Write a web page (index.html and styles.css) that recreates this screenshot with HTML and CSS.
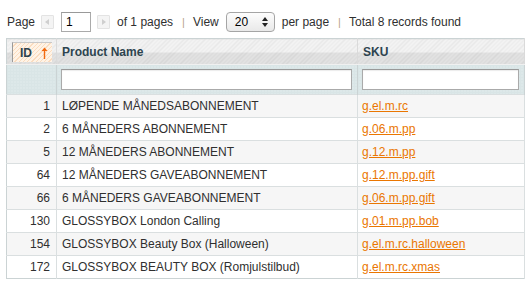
FILE: index.html
```html
<!DOCTYPE html>
<html lang="en">
<head>
    <meta charset="UTF-8">
    <meta name="viewport" content="width=device-width, initial-scale=1.0">
    <title>Products</title>
    <link rel="stylesheet" href="styles.css">
</head>
<body>
    <div class="grid-wrap">
        <div class="pager">
            <span class="label-page">Page</span>
            <span class="arrow-btn prev"></span>
            <input class="page-input" type="text" value="1">
            <span class="arrow-btn next"></span>
            <span class="of-pages">of 1 pages</span>
            <span class="sep">|</span>
            <span class="label-view">View</span>
            <span class="view-select">20<span class="spin"></span></span>
            <span class="per-page">per page</span>
            <span class="sep">|</span>
            <span class="total">Total 8 records found</span>
        </div>

        <table class="data">
            <colgroup>
                <col class="col-id">
                <col class="col-name">
                <col class="col-sku">
            </colgroup>
            <thead>
                <tr class="headings">
                    <th class="sort-cell">
                        <span class="sort-box">ID
                            <svg class="sort-arrow" width="7" height="12" viewBox="0 0 7 12"><path d="M3.5 0.5 L0.5 4 H2.8 V12 H4.2 V4 H6.5 Z" fill="#f26a10"/></svg>
                        </span>
                    </th>
                    <th>Product Name</th>
                    <th>SKU</th>
                </tr>
                <tr class="filter">
                    <th></th>
                    <th><input class="filter-input" type="text"></th>
                    <th><input class="filter-input" type="text"></th>
                </tr>
            </thead>
            <tbody>
                <tr class="even"><td class="num">1</td><td>LØPENDE MÅNEDSABONNEMENT</td><td><a href="#">g.el.m.rc</a></td></tr>
                <tr><td class="num">2</td><td>6 MÅNEDERS ABONNEMENT</td><td><a href="#">g.06.m.pp</a></td></tr>
                <tr class="even"><td class="num">5</td><td>12 MÅNEDERS ABONNEMENT</td><td><a href="#">g.12.m.pp</a></td></tr>
                <tr><td class="num">64</td><td>12 MÅNEDERS GAVEABONNEMENT</td><td><a href="#">g.12.m.pp.gift</a></td></tr>
                <tr class="even"><td class="num">66</td><td>6 MÅNEDERS GAVEABONNEMENT</td><td><a href="#">g.06.m.pp.gift</a></td></tr>
                <tr><td class="num">130</td><td>GLOSSYBOX London Calling</td><td><a href="#">g.01.m.pp.bob</a></td></tr>
                <tr class="even"><td class="num">154</td><td>GLOSSYBOX Beauty Box (Halloween)</td><td><a href="#">g.el.m.rc.halloween</a></td></tr>
                <tr><td class="num">172</td><td>GLOSSYBOX BEAUTY BOX (Romjulstilbud)</td><td><a href="#">g.el.m.rc.xmas</a></td></tr>
            </tbody>
        </table>
    </div>
</body>
</html>
```

FILE: styles.css
```css
body {
    margin: 0;
    background: #fff;
    font-family: "Liberation Sans", Arial, sans-serif;
    font-size: 12px;
    color: #2f2f2f;
}
.grid-wrap {
    padding: 12px 6px 0 6px;
}
.pager {
    display: flex;
    align-items: center;
    height: 20px;
    margin-bottom: 6px;
    padding-left: 1px;
    color: #2f2f2f;
    font-size: 12px;
}
.arrow-btn {
    position: relative;
    display: inline-block;
    width: 11px;
    height: 12px;
    border: 1px solid #e3e3e3;
    background: #f4f4f4;
    border-radius: 1px;
}
.arrow-btn::after {
    content: "";
    position: absolute;
    top: 3px;
    border-top: 3px solid transparent;
    border-bottom: 3px solid transparent;
}
.arrow-btn.prev {
    margin-left: 6px;
}
.arrow-btn.prev::after {
    left: 3px;
    border-right: 4px solid #cfcfcf;
}
.arrow-btn.next {
    margin-left: 6px;
}
.arrow-btn.next::after {
    left: 4px;
    border-left: 4px solid #cfcfcf;
}
.page-input {
    box-sizing: border-box;
    width: 30px;
    height: 20px;
    margin: 0 0 0 7px;
    padding: 0 4px;
    border: 1px solid #aaa;
    border-top-color: #999;
    font-family: "Liberation Sans", Arial, sans-serif;
    font-size: 12px;
    color: #000;
}
.of-pages {
    margin-left: 7px;
}
.sep {
    margin: 0 8px 0 9px;
    color: #b8a48c;
    font-size: 11px;
}
.view-select {
    position: relative;
    box-sizing: border-box;
    display: inline-block;
    width: 49px;
    height: 20px;
    margin-left: 7px;
    padding: 2px 0 0 8px;
    border: 1px solid #a5a5a5;
    border-radius: 4px;
    background: linear-gradient(#fdfdfd, #e9e9e9);
    color: #000;
    font-size: 12px;
    line-height: 15px;
}
.spin {
    position: absolute;
    right: 6px;
    top: 4px;
    width: 0;
    height: 0;
    border-left: 3px solid transparent;
    border-right: 3px solid transparent;
    border-bottom: 4px solid #222;
}
.spin::after {
    content: "";
    position: absolute;
    left: -3px;
    top: 6px;
    border-left: 3px solid transparent;
    border-right: 3px solid transparent;
    border-top: 4px solid #222;
}
.per-page {
    margin-left: 7px;
}
table.data {
    width: 518px;
    border-collapse: collapse;
    table-layout: fixed;
    border: 1px solid #cbd3d4;
}
.col-id { width: 50px; }
.col-name { width: 301px; }
.col-sku { width: 167px; }
.headings th {
    height: 22px;
    padding: 0 5px;
    text-align: left;
    font-weight: bold;
    color: #2d444f;
    border-right: 1px solid #dadada;
    border-bottom: 1px solid #f0f0f0;
    background:
        linear-gradient(to bottom, rgba(0,0,0,0) 52%, rgba(0,0,0,0.07) 52%),
        repeating-linear-gradient(-45deg, #f3f3f3 0 2px, #e7e7e7 2px 3px);
}
.headings th.sort-cell {
    padding: 3px 4px 0 5px;
    vertical-align: top;
}
.sort-box {
    display: flex;
    align-items: center;
    box-sizing: border-box;
    height: 20px;
    padding: 0 0 0 7px;
    border-left: 1px solid #9b9b9b;
    border-top: 1px solid #c9c9c9;
    background: repeating-linear-gradient(-45deg, #fff3e6 0 2px, #fadcbf 2px 3px);
    color: #2d444f;
}
.sort-arrow {
    margin-left: 9px;
}
.filter th {
    height: 29px;
    padding: 0 5px 0 4px;
    border-right: 1px solid #cbd3d4;
    background-color: #d9e5e6;
    background-image: radial-gradient(#e8f0f0 0.6px, transparent 0.8px);
    background-size: 3px 3px;
}
.filter-input {
    display: block;
    box-sizing: border-box;
    width: 100%;
    height: 21px;
    margin: 0;
    border: 1px solid #aaa;
    border-top-color: #999;
    background: #fff;
    box-shadow: inset 0 1px 1px rgba(0,0,0,0.08);
}
tbody td {
    height: 22px;
    padding: 0 5px;
    border-top: 1px solid #dadfe0;
    border-right: 1px solid #dadfe0;
    white-space: nowrap;
    overflow: hidden;
}
tbody td.num {
    text-align: right;
    padding-right: 6px;
}
tbody tr.even td {
    background: #f6f6f6;
}
tbody td:last-child {
    padding-left: 4px;
}
a {
    color: #ea7601;
    text-decoration: underline;
}
```
